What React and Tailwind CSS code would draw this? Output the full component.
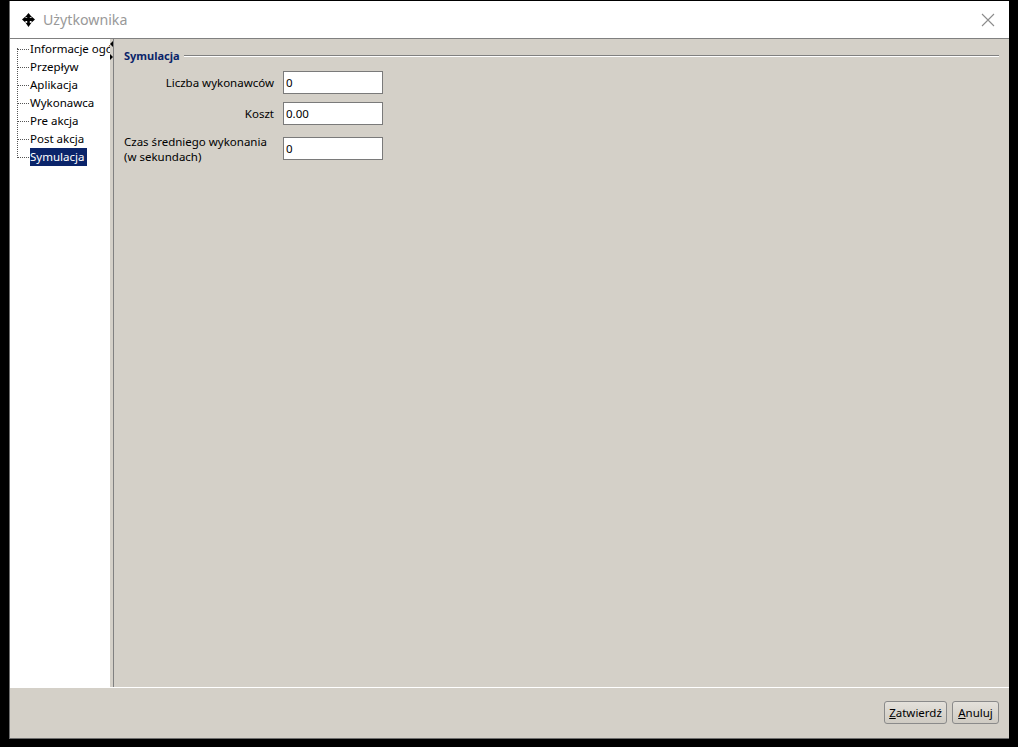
const treeItems = ['Informacje ogólne', 'Przepływ', 'Aplikacja', 'Wykonawca', 'Pre akcja', 'Post akcja', 'Symulacja']

function Field({ label, value, multi, className }) {
  return (
    <div className={`flex ${multi ? 'items-start' : 'items-center'} ${className}`}>
      <div className={`w-[150px] text-[11.5px] text-black ${multi ? '-mt-[3px] text-left leading-[15px]' : 'text-right leading-[16px]'}`}>{label}</div>
      <input
        readOnly
        value={value}
        className="ml-[9px] h-[23px] w-[100px] border border-[#7a7a7a] bg-white px-[2px] text-[11.5px] text-black outline-none"
      />
    </div>
  )
}

function Btn({ hot, rest, className }) {
  return (
    <button className={`h-[23px] rounded-[3px] border border-[#8a8a8a] bg-gradient-to-b from-[#e4e1db] to-[#cfcbc3] text-[11.5px] text-black ${className}`}>
      <span className="underline">{hot}</span>{rest}
    </button>
  )
}

export default function App() {
  return (
    <div className="h-[747px] w-[1018px] overflow-hidden bg-black pl-[9px] pt-[1px] font-['Noto_Sans',sans-serif]">
      <div className="flex h-[738px] w-[1000px] flex-col border-b border-l border-[#6e6e6e] bg-[#d4d0c8]">
        <div className="flex h-[38px] shrink-0 items-center border-b border-[#808080] bg-white pl-[12px] pr-[14px]">
          <svg width="13" height="14" viewBox="0 0 13 14" className="shrink-0">
            <path d="M6.5 0 L10 4.2 H7.8 V5 H9.6 V3.4 L13 6.6 L9.6 9.6 V8 H7.8 V10 Q9 10 9.6 9.6 L6.5 14 L3.4 9.6 Q4 10 5.2 10 V8 H3.4 V9.6 L0 6.6 L3.4 3.4 V5 H5.2 V4.2 H3 Z" fill="#000" />
          </svg>
          <span className="ml-[8px] text-[14.2px] text-[#999999]">Użytkownika</span>
          <svg width="14" height="14" viewBox="0 0 14 14" className="ml-auto" stroke="#8c8c8c" strokeWidth="1.1">
            <path d="M1 1 L13 13 M13 1 L1 13" />
          </svg>
        </div>

        <div className="flex min-h-0 flex-1 border-b border-white">
          <div className="relative h-full w-[100px] shrink-0 overflow-hidden bg-white pl-[20px] pt-[1px]">
            <div className="absolute left-[7px] top-[9px] h-[108px] w-0 border-l border-dotted border-[#555]" />
            {treeItems.map((t, i) => (
              <div key={t} className="relative h-[18px] whitespace-nowrap text-[11.5px] leading-[18px]">
                <span className="absolute left-[-13px] top-[9px] w-[12px] border-t border-dotted border-[#555]" />
                <span className={i === 6 ? 'inline-block h-[18px] w-[57px] bg-[#0a246a] text-white' : 'text-black'}>{t}</span>
              </div>
            ))}
          </div>

          <div className="relative w-[3px] shrink-0 bg-[#d4d0c8]">
            <span className="absolute left-0 top-[2px] h-0 w-0 border-y-[3px] border-r-[3px] border-y-transparent border-r-black" />
            <span className="absolute left-0 top-[15px] h-0 w-0 border-y-[3px] border-l-[3px] border-y-transparent border-l-black" />
          </div>

          <div className="flex-1 border-l border-[#808080] pl-[10px] pr-[10px] pt-[9px]">
            <div className="flex items-center">
              <span className="text-[11px] font-bold leading-[16px] text-[#0a246a]">Symulacja</span>
              <div className="ml-[4px] flex-1 border-t border-b border-t-[#808080] border-b-white" />
            </div>
            <div className="mt-[7px]">
              <Field label="Liczba wykonawców" value="0" />
              <Field label="Koszt" value="0.00" className="mt-[8px]" />
              <Field label={<>Czas średniego wykonania<br />(w sekundach)</>} value="0" multi className="mt-[12px]" />
            </div>
          </div>
        </div>

        <div className="flex h-[50px] shrink-0 items-center justify-end gap-[5px] pb-[1px] pr-[10px]">
          <Btn hot="Z" rest="atwierdź" className="w-[63px]" />
          <Btn hot="A" rest="nuluj" className="w-[47px]" />
        </div>
      </div>
    </div>
  )
}
